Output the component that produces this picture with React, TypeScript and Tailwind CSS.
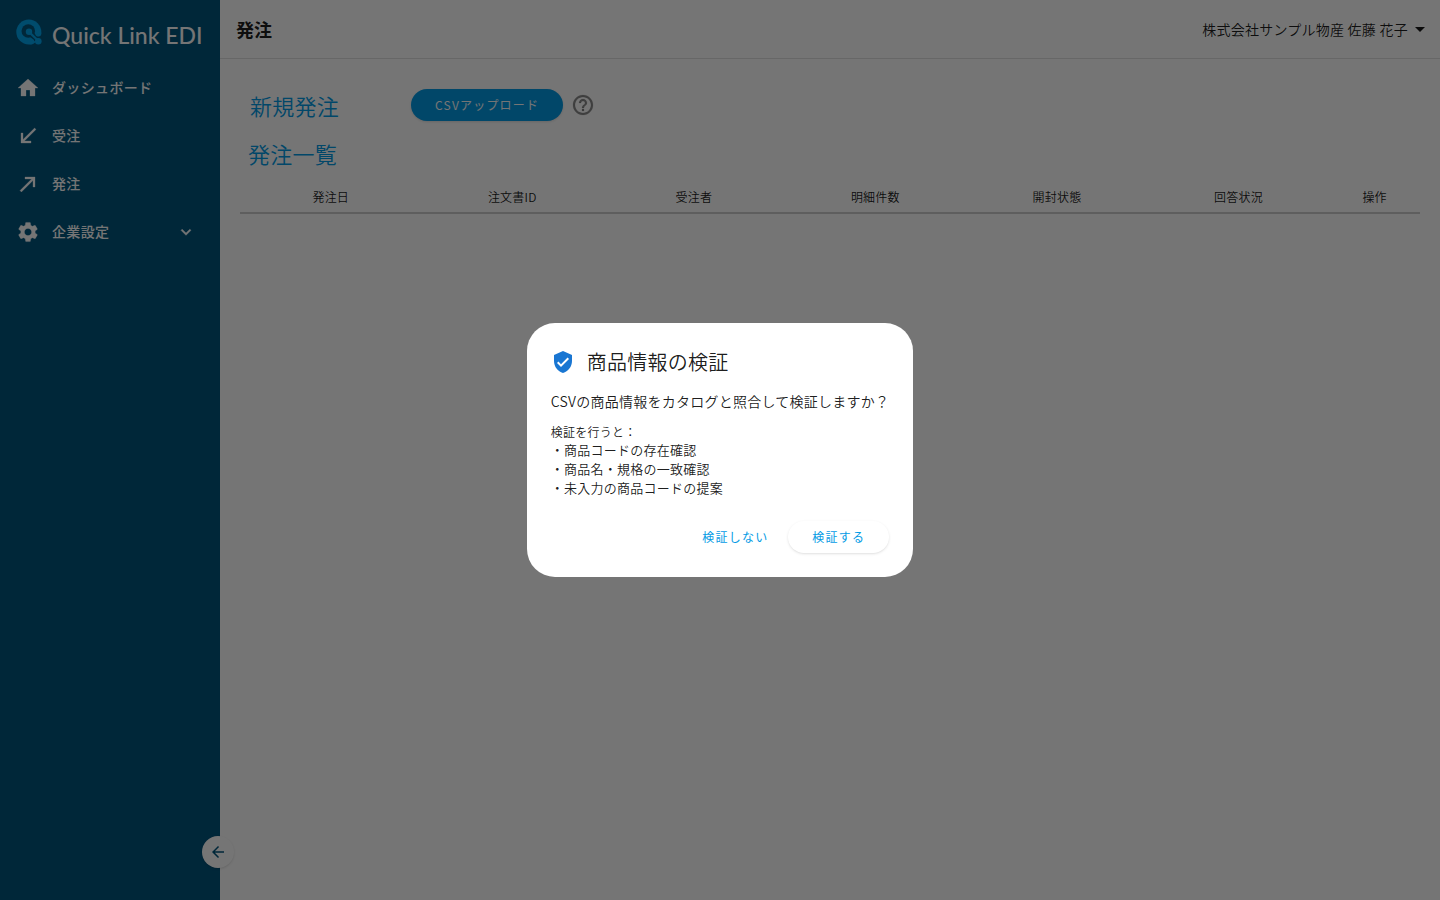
import React from 'react';
import {
  MdArrowBack,
  MdArrowDropDown,
  MdCallMade,
  MdCallReceived,
  MdExpandMore,
  MdHelpOutline,
  MdHome,
  MdSettings,
  MdVerifiedUser,
} from 'react-icons/md';

const navItems = [
  { label: 'ダッシュボード', icon: MdHome },
  { label: '受注', icon: MdCallReceived },
  { label: '発注', icon: MdCallMade },
  { label: '企業設定', icon: MdSettings, expandable: true },
];

const columns = ['発注日', '注文書ID', '受注者', '明細件数', '開封状態', '回答状況', '操作'];

const checks = ['商品コードの存在確認', '商品名・規格の一致確認', '未入力の商品コードの提案'];

function Logo() {
  return (
    <a href="#" aria-label="Quick Link EDI" className="block px-4 pt-4">
      <svg viewBox="0 0 188 40" className="block h-10 w-full" fill="none">
        <circle cx="12.8" cy="16" r="12.5" fill="#00a5ee" />
        <path d="M20 28.5h7v-12l-5 4z" fill="#00557d" />
        <circle cx="12.3" cy="15" r="6.8" fill="#00557d" />
        <path d="M13 16l9.5 9" stroke="#00557d" strokeWidth="5.5" strokeLinecap="round" />
        <path d="M13 16l9.5 9" stroke="#00a5ee" strokeWidth="2.4" />
        <circle cx="13" cy="15.8" r="3.2" fill="#00a5ee" />
        <circle cx="22.3" cy="25.2" r="3.3" fill="#00a5ee" />
        <circle cx="22.3" cy="17.5" r="3" fill="#00a5ee" />
        <circle cx="15" cy="25.5" r="3" fill="#00a5ee" />
        <text x="36" y="28" fontSize="23" fill="#fff" className="font-['Lato'] font-medium tracking-normal">
          Quick Link EDI
        </text>
      </svg>
    </a>
  );
}

function Sidebar() {
  return (
    <aside className="relative w-[220px] shrink-0 bg-[#00557d] text-white">
      <Logo />
      <nav className="mt-2">
        {navItems.map(({ label, icon: Icon, expandable }) => (
          <a key={label} href="#" className="flex h-12 items-center gap-3 px-4 text-sm font-medium tracking-wide">
            <Icon className="h-6 w-6 [&>path:last-child]:stroke-[0.3]" />
            <span className="flex-1 pb-0.5">{label}</span>
            {expandable && <MdExpandMore className="mr-2 h-5 w-5 [&>path:last-child]:stroke-[0.5]" />}
          </a>
        ))}
      </nav>
      <button
        aria-label="メニューを閉じる"
        className="absolute bottom-8 -right-[14px] flex h-8 w-8 items-center justify-center rounded-full bg-white text-[#00557d] shadow"
      >
        <MdArrowBack className="h-[18px] w-[18px]" />
      </button>
    </aside>
  );
}

function VerifyDialog() {
  return (
    <div className="fixed inset-0 flex items-center justify-center bg-black/54">
      <div
        role="dialog"
        aria-modal="true"
        aria-labelledby="verify-title"
        className="rounded-[28px] bg-white p-6 tracking-[0.015em] text-black/90"
      >
        <h2 id="verify-title" className="flex items-center gap-3 text-xl leading-[30px]">
          <MdVerifiedUser className="h-6 w-6 text-[#1976d2]" />
          商品情報の検証
        </h2>
        <p className="mt-[14px] text-sm">CSVの商品情報をカタログと照合して検証しますか？</p>
        <p className="mt-[13px] text-xs">検証を行うと：</p>
        <ul className="text-[13px] leading-[19px]">
          {checks.map((c) => (
            <li key={c}>・{c}</li>
          ))}
        </ul>
        <div className="mt-6 flex justify-end gap-1 text-xs font-normal tracking-widest text-[#039be5]">
          <button className="h-8 px-4">検証しない</button>
          <button className="h-8 rounded-full px-6 shadow">検証する</button>
        </div>
      </div>
    </div>
  );
}

export default function App() {
  return (
    <div className="flex min-h-screen bg-white font-['Noto_Sans_CJK_JP',sans-serif] font-[350] tracking-[0.015em] text-black/90">
      <Sidebar />
      <div className="min-w-0 flex-1">
        <header className="flex h-[59px] items-center justify-between border-b border-black/12 px-4">
          <h1 className="text-lg font-bold tracking-normal">発注</h1>
          <button className="flex items-center text-sm tracking-[0.018em]">
            株式会社サンプル物産 佐藤 花子
            <MdArrowDropDown className="-mr-2 h-6 w-6" />
          </button>
        </header>
        <main className="px-5 pt-[30px]">
          <div className="flex items-center pl-[10px]">
            <h2 className="w-[161px] text-[22px] leading-8 text-[#039be5]">新規発注</h2>
            <button className="h-8 rounded-full bg-[#039be5] px-6 text-xs font-normal tracking-widest text-white shadow">
              CSVアップロード
            </button>
            <button aria-label="ヘルプ" className="ml-2 text-black/45">
              <MdHelpOutline className="h-6 w-6 [&>path:last-child]:stroke-[0.2]" />
            </button>
          </div>
          <h2 className="mt-[14px] pl-2 text-[22px] leading-9 text-[#039be5]">発注一覧</h2>
          <table className="mt-[10px] w-full table-fixed border-b-2 border-black/20 text-xs">
            <thead>
              <tr>
                {columns.map((c) => (
                  <th key={c} className="h-8 font-[350] last:w-1/13">
                    {c}
                  </th>
                ))}
              </tr>
            </thead>
          </table>
        </main>
      </div>
      <VerifyDialog />
    </div>
  );
}
